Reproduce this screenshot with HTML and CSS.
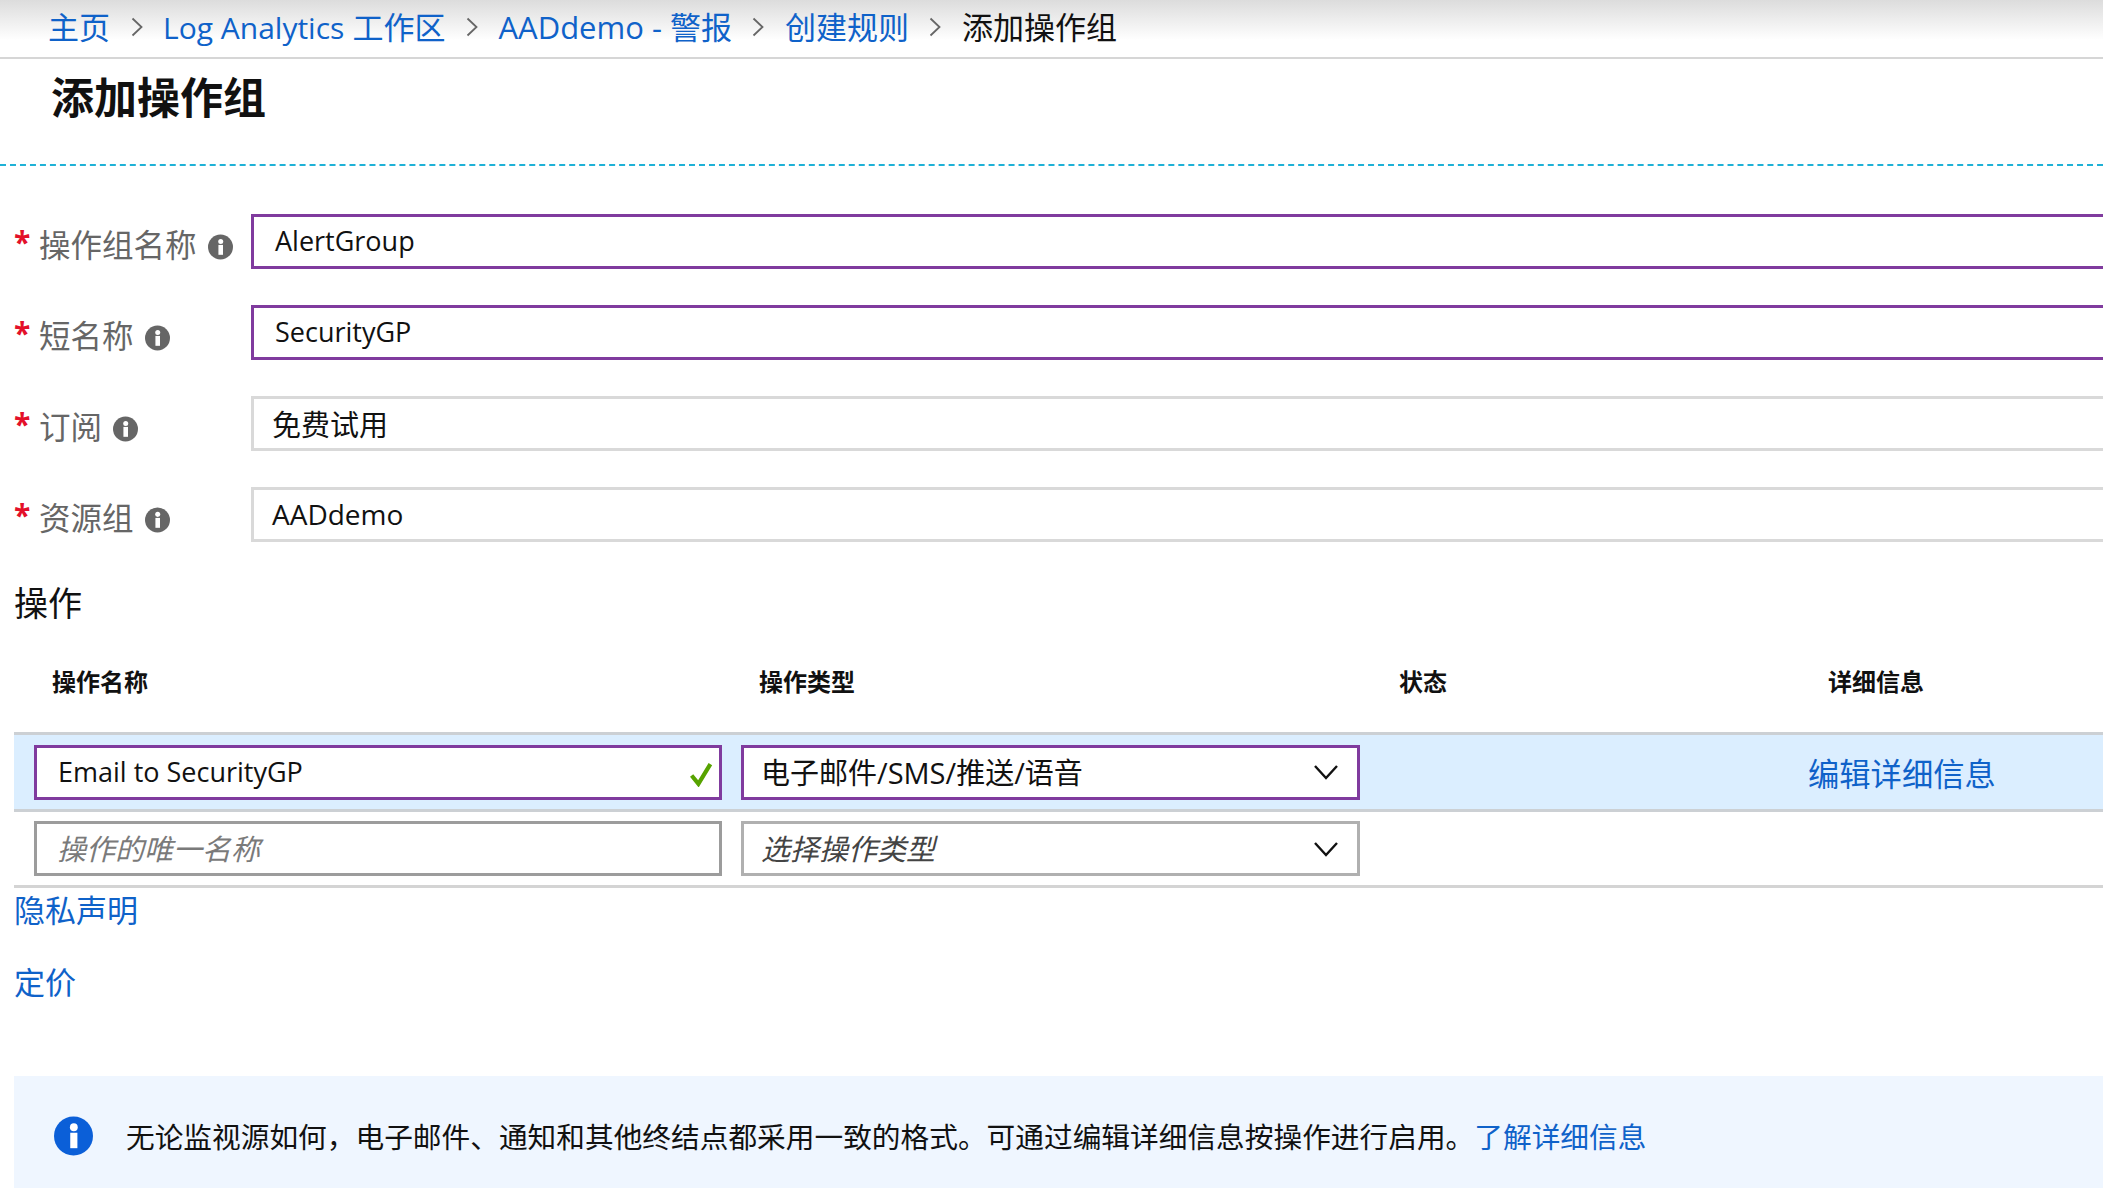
FILE: index.html
```html
<!DOCTYPE html>
<html lang="zh-CN">

<head>
  <meta charset="UTF-8" />
  <title>添加操作组</title>
  <link rel="stylesheet" href="styles.css">
</head>

<body>
  <svg class="defs" width="0" height="0">
    <symbol id="info" viewBox="0 0 24 24">
      <circle cx="12" cy="12" r="12" />
      <rect x="10" y="10" width="4.4" height="9.5" fill="#fff" />
      <circle cx="12.2" cy="6.6" r="2.4" fill="#fff" />
    </symbol>
    <symbol id="chev" viewBox="0 0 26 16">
      <path d="M2 2 L13 14 L24 2" fill="none" stroke="#111" stroke-width="2.4" />
    </symbol>
    <symbol id="crumb" viewBox="0 0 12 20">
      <path d="M1.5 1.5 L10.5 10 L1.5 18.5" fill="none" stroke="#666" stroke-width="1.8" />
    </symbol>
  </svg>

  <nav class="crumbs">
    <a>主页</a>
    <svg class="crumb-sep"><use href="#crumb" /></svg>
    <a><span class="en">Log Analytics</span> 工作区</a>
    <svg class="crumb-sep"><use href="#crumb" /></svg>
    <a>AADdemo - 警报</a>
    <svg class="crumb-sep"><use href="#crumb" /></svg>
    <a>创建规则</a>
    <svg class="crumb-sep"><use href="#crumb" /></svg>
    <span>添加操作组</span>
  </nav>

  <header class="title">
    <h1>添加操作组</h1>
  </header>

  <section class="form">
    <div class="row">
      <div class="label"><b>*</b><span>操作组名称</span><svg class="tip"><use href="#info" /></svg></div>
      <div class="box edited">AlertGroup</div>
    </div>
    <div class="row">
      <div class="label"><b>*</b><span>短名称</span><svg class="tip"><use href="#info" /></svg></div>
      <div class="box edited">SecurityGP</div>
    </div>
    <div class="row">
      <div class="label"><b>*</b><span>订阅</span><svg class="tip"><use href="#info" /></svg></div>
      <div class="box locked zh">免费试用</div>
    </div>
    <div class="row">
      <div class="label"><b>*</b><span>资源组</span><svg class="tip"><use href="#info" /></svg></div>
      <div class="box locked wide">AADdemo</div>
    </div>
  </section>

  <h2>操作</h2>

  <section class="actions">
    <div class="grid head">
      <div class="th first">操作名称</div>
      <div class="th">操作类型</div>
      <div class="th">状态</div>
      <div class="th last">详细信息</div>
    </div>
    <div class="grid item selected">
      <div class="cell name edited">
        Email to SecurityGP
        <svg class="ok" viewBox="0 0 22 24"><path d="M2 13 L8.5 21 L20 2" fill="none" stroke="#57a300" stroke-width="4" /></svg>
      </div>
      <div class="cell type edited zh">电子邮件/SMS/推送/语音<svg class="down"><use href="#chev" /></svg></div>
      <div></div>
      <a class="edit">编辑详细信息</a>
    </div>
    <div class="grid item">
      <div class="cell name empty hint zh">操作的唯一名称</div>
      <div class="cell type empty choose zh">选择操作类型<svg class="down"><use href="#chev" /></svg></div>
    </div>
  </section>

  <div class="links">
    <a>隐私声明</a>
    <a>定价</a>
  </div>

  <div class="note">
    <svg class="note-icon"><use href="#info" /></svg>
    <p>无论监视源如何，电子邮件、通知和其他终结点都采用一致的格式。可通过编辑详细信息按操作进行启用。<a>了解详细信息</a></p>
  </div>
</body>

</html>
```

FILE: styles.css
```css
* {
  box-sizing: border-box;
  margin: 0;
  padding: 0;
}

html,
body {
  height: 1188px;
  overflow: hidden;
}

body {
  background: #fff;
  color: #111;
  font-family: "Open Sans", "Noto Sans CJK SC", sans-serif;
  font-size: 27px;
}

a {
  color: #0f62c9;
}

.defs {
  position: absolute;
}

.zh {
  font-size: 29px;
}

.wide {
  font-size: 28px;
}

.crumbs {
  height: 59px;
  padding: 0 0 6px 48px;
  display: flex;
  align-items: center;
  gap: 20.5px;
  border-bottom: 2px solid #d6d6d6;
  background: linear-gradient(#dcdcdc, #fff 70%);
  font-size: 31px;
}

.en {
  font-size: 30px;
}

.crumb-sep {
  width: 12px;
  height: 20px;
  margin-top: 3px;
  fill: none;
}

.title {
  height: 107px;
  padding: 15px 0 0 51px;
  border-bottom: 2px dashed #1fb1d6;
}

h1 {
  font-size: 43px;
  line-height: 48px;
  font-weight: 700;
}

.form {
  padding-top: 48px;
  display: flex;
  flex-direction: column;
  gap: 36px;
}

.row {
  display: flex;
  height: 55px;
}

.label {
  width: 251px;
  padding: 2px 0 0 14px;
  display: flex;
  align-items: center;
  color: #666;
  font-size: 31.5px;
}

.label b {
  width: 25px;
  color: #e3102a;
  font-weight: 700;
  font-size: 30px;
  margin-top: -2px;
}

.tip {
  width: 25px;
  height: 26px;
  margin: 8px 0 0 11px;
  fill: #666;
}

.box {
  flex: 1;
  height: 55px;
  padding: 0 0 2px 21px;
  display: flex;
  align-items: center;
  border-right: 0 !important;
  background: #fff;
}

.edited {
  border: 3px solid #803b9e;
}

.locked {
  padding-left: 18px;
  border: 3px solid #d9d9d9;
}

h2 {
  margin: 39px 0 0 14px;
  height: 44px;
  font-size: 34px;
  line-height: 44px;
  font-weight: 400;
}

.grid {
  display: grid;
  grid-template-columns: 727px 640px 419px 1fr;
  align-items: center;
}

.actions {
  margin: 0 0 0 14px;
}

.head {
  height: 99px;
  margin-top: 8px;
  padding-bottom: 5px;
  font-size: 24px;
}

.th {
  padding-left: 18px;
  font-weight: 700;
}

.th.first {
  padding-left: 38px;
}

.th.last {
  padding-left: 28px;
}

.item {
  height: 77px;
  border-top: 3px solid #ccd0d4;
}

.item:last-child {
  height: 79px;
  border-bottom: 3px solid #d4d4d4;
}

.selected {
  background: #dbeeff;
}

.cell {
  height: 55px;
  display: flex;
  align-items: center;
  justify-content: space-between;
  background: #fff;
}

.name {
  margin: 0 0 0 20px;
  width: 688px;
  padding: 0 6px 2px 21px;
}

.name.zh,
.type.zh {
  padding-bottom: 3px;
}

.name.zh {
  padding-left: 20px;
}

.type {
  width: 619px;
  padding: 0 12px 0 17px;
}

.empty.name {
  border: 3px solid #9c9c9c;
}

.empty.type {
  border: 3px solid #b0b0b0;
}

.hint {
  justify-content: flex-start;
  color: #7a7a7a;
  font-style: italic;
}

.choose {
  color: #444;
  font-style: italic;
}

.ok {
  width: 24px;
  height: 25px;
  margin-top: 6px;
}

.down {
  width: 26px;
  height: 16px;
  flex: none;
  margin: 3px 6px 0 0;
}

.edit {
  padding-left: 8px;
  font-size: 31.3px;
  margin-top: 1px;
}

.links {
  padding: 0 0 0 14px;
  display: flex;
  flex-direction: column;
  gap: 28px;
  font-size: 31px;
  line-height: 44px;
}

.note {
  margin: 72px 0 0 14px;
  height: 112px;
  padding: 0 0 0 40px;
  display: flex;
  align-items: center;
  gap: 33px;
  background: #eff6ff;
}

.note-icon {
  width: 39px;
  height: 40px;
  flex: none;
  fill: #0b5fd8;
  margin-top: 8px;
}

.note p {
  font-size: 28.7px;
  white-space: nowrap;
  margin-top: 7px;
}
```
